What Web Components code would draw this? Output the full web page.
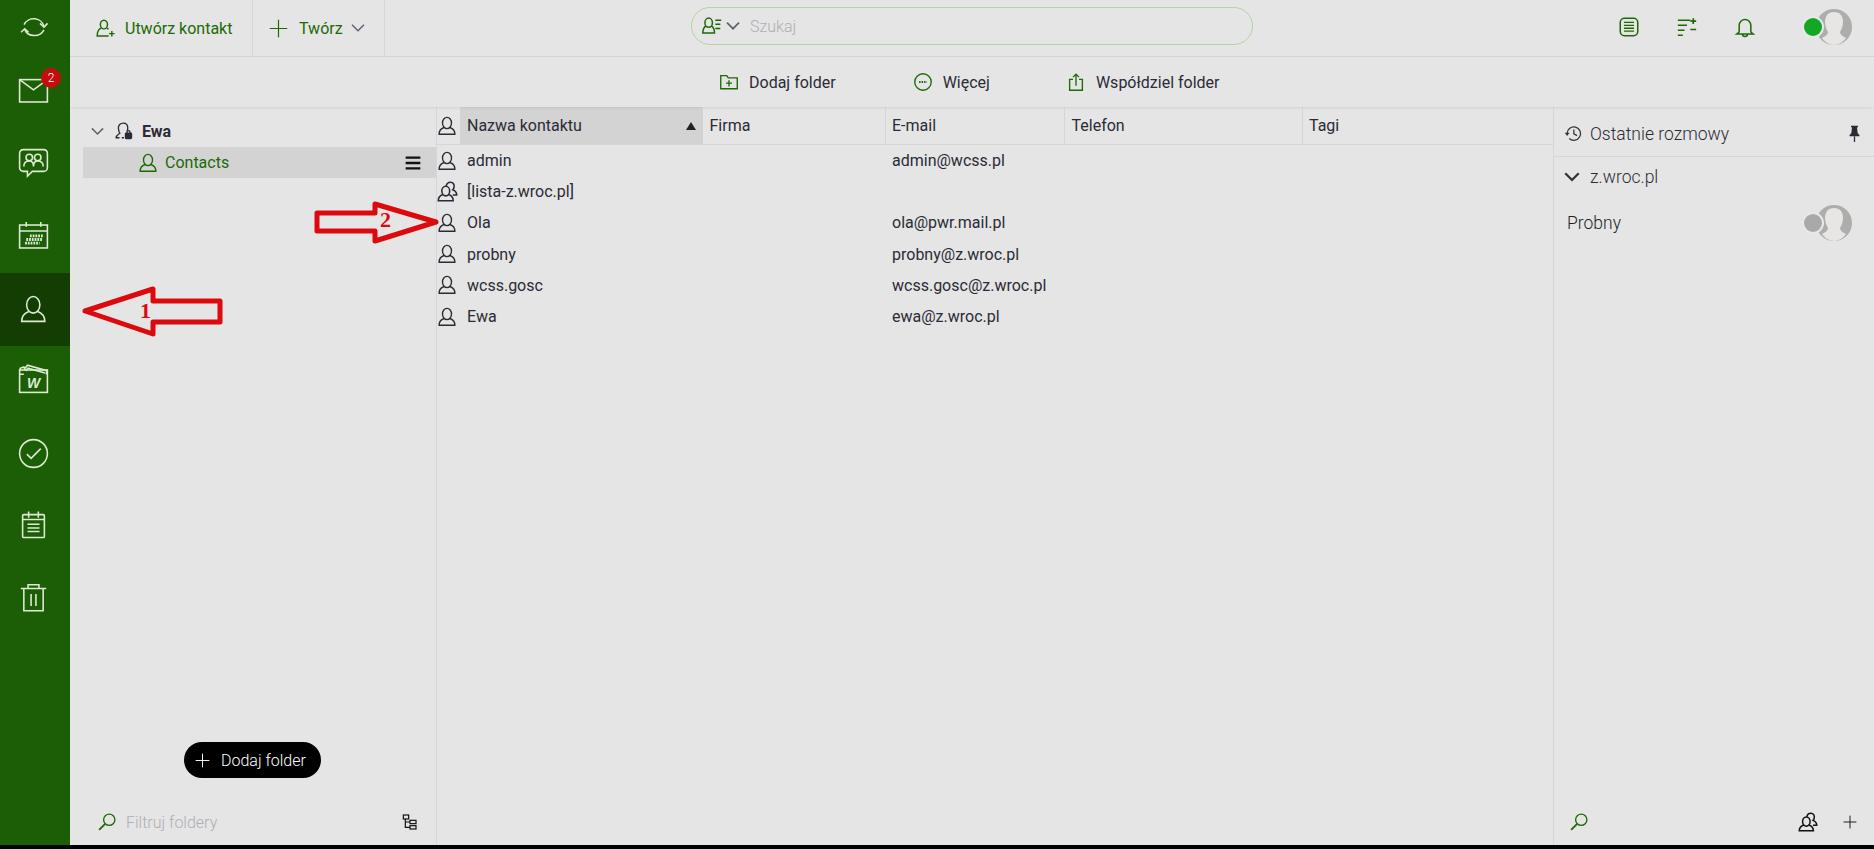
<!DOCTYPE html>
<html lang="pl">
<head>
<meta charset="utf-8">
<title>Kontakty</title>
<style>
    html, body { margin: 0; height: 100%; overflow: hidden; background: #000; }
    body { font-family: Roboto, "Liberation Sans", sans-serif; }
</style>
</head>
<body>
<app-shell>
    <app-rail slot="rail"></app-rail>
    <top-bar slot="top"></top-bar>
    <action-bar slot="actions"></action-bar>
    <folder-panel slot="folders"></folder-panel>
    <contact-table slot="table">
        <contact-row name="admin" email="admin@wcss.pl"></contact-row>
        <contact-row name="[lista-z.wroc.pl]" icon="group"></contact-row>
        <contact-row name="Ola" email="ola@pwr.mail.pl"></contact-row>
        <contact-row name="probny" email="probny@z.wroc.pl"></contact-row>
        <contact-row name="wcss.gosc" email="wcss.gosc@z.wroc.pl"></contact-row>
        <contact-row name="Ewa" email="ewa@z.wroc.pl"></contact-row>
    </contact-table>
    <recent-panel slot="recent"></recent-panel>
</app-shell>
<note-arrow dir="left" label="1" style="left:80px;top:285px"></note-arrow>
<note-arrow dir="right" label="2" style="left:312px;top:200px"></note-arrow>

<script>
    /* ikony - wszystko na currentColor, viewBox 24 */
    const ICONS = {
        sync: '<path d="M3.500 10A9 8.500 0 0 1 20.600 12"/><path d="M17.100 8.900l3.500 3.200 3-3.200"/><path d="M20.500 14.500A9 8.500 0 0 1 4 14"/><path d="M.9 16.500l3.100-3 3.300 3"/>',
        mail: '<rect x=".5" y="3" width="23" height="18.500"/><path d="M.5 3L12 11.500 23.500 3"/>',
        chat: '<path d="M3.500 .5h17a3 3 0 0 1 3 3v12a3 3 0 0 1-3 3H11l-4 4v-4H3.500a3 3 0 0 1-3-3v-12a3 3 0 0 1 3-3z"/><circle cx="8.500" cy="7" r="2.700"/><circle cx="15.500" cy="7" r="2.700"/><path d="M4 14.500c0-3 2-4.500 4.500-4.500S12 11.500 12 14.500M12 14.500c0-3 1-4.500 3.500-4.500S20 11.500 20 14.500"/>',
        calendar: '<rect x=".5" y="2.500" width="23" height="19"/><path d="M.5 7.500h23M6 0v4M18 0v4"/><path stroke-width="2.400" stroke-dasharray="1.500 .8" d="M9 11.500h11M6 14.500h13M5 17.500h12"/>',
        person: '<ellipse cx="12" cy="8" rx="6" ry="7.500"/><path d="M8 14C4 15.500 1.500 18 1.500 23h21c0-5-2.500-7.500-6.500-9"/>',
        group: '<ellipse cx="10" cy="11.500" rx="4.500" ry="5.500"/><path d="M7 15.500c-3 1-5.500 3-5.500 7h17c0-4-2.500-6-5.500-7"/><path d="M10.500 6c.5-3 3-4.500 5-4.500 3 0 4.500 2.500 4 5.500-.2 1.200-.7 2.300-1.500 3 2.500 1 4.500 3 4.500 6H18"/>',
        docs: '<rect x=".5" y="5" width="23" height="18.500"/><path d="M.5 8.500h3.500M1 5V3.500l3-1 1 2.500M5 3.500L7 1l16 4.500-.5 3M5.500 5.500l2-2 14 4"/>',
        check: '<circle cx="12" cy="12" r="11.500"/><path d="M6.500 12.500l3.500 3.500L18 8"/>',
        note: '<rect x="3" y="3" width="18" height="19" rx="1"/><path d="M8 .5v5M16 .5v5M3 7h18M7 11h10M7 14h10M7 17h10"/>',
        trash: '<path d="M1.500 4.500h21M4 4.500V23h16V4.500M7.500 4.500V1.500h9v3M10 9v10M14 9v10"/>',
        personAdd: '<ellipse cx="10" cy="7" rx="4.500" ry="5.500"/><path d="M6.500 11.500C3.500 12.500 1.500 15 1.500 21.500H16"/><path d="M13.500 11.500c1 .4 1.700.9 2.300 1.500M20 15v7M16.500 18.500h7"/>',
        plus: '<path d="M12 1v22M1 12h22"/>',
        chevron: '<path d="M3 7l9 9 9-9"/>',
        personList: '<ellipse cx="8" cy="8" rx="4.500" ry="5.500"/><path d="M5 12c-2.500 1-4 3.500-4 8.500h14c0-5-1.500-7.500-4-8.500M16 5h7M16 10h6M16 15h6"/>',
        folderAdd: '<path d="M1 21V3.500h8l2 3h12V21z"/><path d="M12 9.500v8.500M8 13.500h8"/>',
        more: '<circle cx="12" cy="12" r="11"/><path stroke-width="2.400" stroke-dasharray="2 1.300" d="M6.800 12h10.400"/>',
        share: '<path d="M8 8.500H3.500V23h17V8.500H16M12 17V1.500M8 5.500l4-4 4 4"/>',
        list: '<rect x="1.500" y="1.500" width="21" height="21" rx="5"/><path stroke-width="1.600" d="M6 6.500h12M6 10h12M6 13.500h12M6 17h12"/>',
        tasks: '<path d="M1 4h15M1 10h11M1 16h8M1 22h6"/><path stroke-width="2" d="M19.500 1.500v7M16 5h7M16 15h7"/>',
        bell: '<path d="M5 18V10a7 7 0 0 1 14 0v8l3 2.500H2z"/><path d="M9 20.500a3 3 0 0 0 6 0"/>',
        personLock: '<path d="M6 21c-1.500 0-3.500 0-4.500 0 0-3 3-4.500 5-6-1.500-2.500-2-5-2-7 0-4 2.500-6.500 6.500-6.500S17 4 17 8c0 1.500-.3 2.800-.8 4M12 21H9"/><rect x="14" y="15" width="8" height="7" rx="1" fill="currentColor"/><path d="M16 15v-1.500a2 2 0 0 1 4 0V15"/>',
        burger: '<path stroke-width="3.500" d="M1 4h22M1 12h22M1 20h22"/>',
        search: '<circle cx="15" cy="9" r="7.500"/><path stroke-width="2.400" d="M9.500 14.500L1.500 22.500"/>',
        tree: '<rect x="2" y="1.500" width="8" height="6"/><rect x="12" y="9.500" width="9" height="5"/><rect x="12" y="17.500" width="9" height="5"/><path d="M5 7.500V20h7M5 12h7"/>',
        history: '<path d="M3 12a9.500 9.500 0 1 1 3 7"/><path fill="currentColor" stroke="none" d="M-.5 11h7l-3.500 4.500z"/><path d="M12.500 6.500v6l4.500 2.500"/>',
        pin: '<path fill="currentColor" stroke="none" d="M7 1h10v2h-1.500l1 8.500 2.500 2.500v2H5v-2l2.500-2.500 1-8.500H7z"/><path d="M12 16v8"/>'
    };

    class XIcon extends HTMLElement {
        connectedCallback() {
            const size = this.getAttribute('size') || 16;
            const sw = this.getAttribute('sw') || 1.800;
            this.attachShadow({mode: 'open'}).innerHTML = `
                <style>:host { display: inline-flex; flex: none; width: ${size}px; height: ${size}px; } svg { display: block; width: 100%; height: 100%; overflow: visible; }</style>
                <svg viewBox="0 0 24 24" fill="none" stroke="currentColor" stroke-width="${sw}">${ICONS[this.getAttribute('name')]}</svg>`;
        }
    }
    customElements.define('x-icon', XIcon);

    class AppShell extends HTMLElement {
        constructor() {
            super();
            this.attachShadow({mode: 'open'}).innerHTML = `
                <style>
                    :host { display: grid; grid-template-columns: 70px 367px 1116px 1fr; grid-template-rows: 57px 50px 738px; height: 845px; background: #e5e5e5; color: #2b2b36; font: 400 16px Roboto, "Liberation Sans", sans-serif; }
                    ::slotted([slot=rail]) { grid-row: 1 / 4; }
                    ::slotted([slot=top]), ::slotted([slot=actions]) { grid-column: 2 / 5; }
                </style>
                <slot name="rail"></slot><slot name="top"></slot><slot name="actions"></slot>
                <slot name="folders"></slot><slot name="table"></slot><slot name="recent"></slot>`;
        }
    }
    customElements.define('app-shell', AppShell);

    class RailItem extends HTMLElement {
        constructor() {
            super();
            this.attachShadow({mode: 'open'}).innerHTML = `
                <style>
                    :host { position: relative; display: flex; align-items: center; justify-content: center; height: 73px; padding-right: 3px; color: #dcebd2; }
                    :host([active]) { background: #143d04; }
                    :host([short]) { height: 54px; }
                    .badge { position: absolute; left: 41px; top: 14px; width: 20px; height: 20px; border-radius: 50%; background: #c50d0d; color: #fff; font: 300 12px/20px Roboto, sans-serif; text-align: center; }
                    .badge:empty { display: none; }
                </style>
                <slot></slot><span class="badge"></span>`;
        }
        connectedCallback() {
            this.shadowRoot.querySelector('.badge').textContent = this.getAttribute('badge') || '';
        }
    }
    customElements.define('rail-item', RailItem);

    class AppRail extends HTMLElement {
        constructor() {
            super();
            this.attachShadow({mode: 'open'}).innerHTML = `
                <style>
                    :host { display: flex; flex-direction: column; background: #1c5e06; }
                    .low { height: 71.800px; }
                    .w { position: relative; width: 29px; height: 29px; margin-top: -6px; }
                    .w b { position: absolute; left: 0; right: 0; top: 12px; text-align: center; font: italic 700 14px/14px "Liberation Sans", sans-serif; color: #dcebd2; }
                </style>
                <rail-item short><x-icon name="sync" size="28" sw="1.300"></x-icon></rail-item>
                <rail-item badge="2"><x-icon name="mail" size="29" sw="1.300"></x-icon></rail-item>
                <rail-item><x-icon name="chat" size="29" sw="1.300"></x-icon></rail-item>
                <rail-item><x-icon name="calendar" size="29" sw="1.300"></x-icon></rail-item>
                <rail-item active><x-icon name="person" size="26.500" sw="1.400"></x-icon></rail-item>
                <rail-item class="low"><span class="w"><x-icon name="docs" size="29" sw="1.300"></x-icon><b>W</b></span></rail-item>
                <rail-item class="low"><x-icon name="check" size="29" sw="1.300"></x-icon></rail-item>
                <rail-item class="low"><x-icon name="note" size="29" sw="1.300"></x-icon></rail-item>
                <rail-item class="low"><x-icon name="trash" size="29" sw="1.300"></x-icon></rail-item>`;
        }
    }
    customElements.define('app-rail', AppRail);

    class TopBar extends HTMLElement {
        constructor() {
            super();
            this.attachShadow({mode: 'open'}).innerHTML = `
                <style>
                    :host { display: flex; align-items: stretch; border-bottom: 1px solid #d6d6d6; box-sizing: border-box; color: #1c6a04; }
                    .btn { display: flex; align-items: center; border-right: 1px solid #d6d6d6; height: 56px; box-sizing: border-box; }
                    .create { width: 183px; padding-left: 26px; gap: 10px; }
                    .new { width: 132px; padding-left: 16px; }
                    .new span { margin: 0 7px 0 11px; }
                    .new x-icon:last-child { color: #5d6470; }
                    .search { display: flex; flex: none; align-items: center; width: 562px; height: 38px; box-sizing: border-box; margin: 7px 0 0 306px; border: 1px solid #b6d3a2; border-radius: 19px; padding-left: 10px; }
                    .search .chev { color: #5d6470; margin: 0 9px 0 3px; }
                    .search span { color: #aeaeb4; font-weight: 300; }
                    .tools { display: flex; align-items: center; margin-left: auto; padding-right: 22px; gap: 38px; height: 54px; }
                    user-avatar { margin-left: 11px; }
                </style>
                <div class="btn create"><x-icon name="personAdd" size="19"></x-icon><span>Utwórz kontakt</span></div>
                <div class="btn new"><x-icon name="plus" size="19" sw="1.500"></x-icon><span>Twórz</span><x-icon name="chevron" size="16" sw="2.200"></x-icon></div>
                <div class="search"><x-icon name="personList" size="20"></x-icon><x-icon class="chev" name="chevron" size="16" sw="2.600"></x-icon><span>Szukaj</span></div>
                <div class="tools">
                    <x-icon name="list" size="20"></x-icon>
                    <x-icon name="tasks" size="20"></x-icon>
                    <x-icon name="bell" size="20"></x-icon>
                    <user-avatar status="on"></user-avatar>
                </div>`;
        }
    }
    customElements.define('top-bar', TopBar);

    /* awatar ze statusem - dot lezy na obrazku */
    class UserAvatar extends HTMLElement {
        connectedCallback() {
            const on = this.getAttribute('status') === 'on';
            this.attachShadow({mode: 'open'}).innerHTML = `
                <style>
                    :host { position: relative; display: block; width: 48px; height: 36px; }
                    svg { position: absolute; right: 0; top: 0; width: 36px; height: 36px; }
                    .dot { position: absolute; left: 0; top: 9px; width: 18px; height: 18px; border-radius: 50%; background: ${on ? '#12a824' : '#a9a9a9'}; box-shadow: 0 0 0 2px #e8e8e8; }
                </style>
                <svg viewBox="0 0 36 36">
                    <circle cx="18" cy="18" r="18" fill="#adadab"/>
                    <path fill="#e8e6e4" d="M18 3c6 0 9 4 9 10 0 5-2 8-3 10 0 3 4 5 6 6-3 4-7 7-12 7S9 33 6 29c2-1 6-3 6-6-1-2-3-5-3-10 0-6 3-10 9-10z"/>
                </svg>
                <span class="dot"></span>`;
        }
    }
    customElements.define('user-avatar', UserAvatar);

    class ActionBar extends HTMLElement {
        constructor() {
            super();
            this.attachShadow({mode: 'open'}).innerHTML = `
                <style>
                    :host { display: flex; align-items: center; position: relative; z-index: 1; padding-left: 650px; box-shadow: 0 1px 3px rgba(0,0,0,.08); }
                    .act { display: flex; align-items: center; gap: 11px; }
                    x-icon { color: #1c6a04; }
                    .more { margin-left: 78px; }
                    .share { margin-left: 77px; }
                </style>
                <div class="act"><x-icon name="folderAdd" size="18"></x-icon><span>Dodaj folder</span></div>
                <div class="act more"><x-icon name="more" size="18"></x-icon><span>Więcej</span></div>
                <div class="act share"><x-icon name="share" size="18"></x-icon><span>Współdziel folder</span></div>`;
        }
    }
    customElements.define('action-bar', ActionBar);

    class FolderPanel extends HTMLElement {
        constructor() {
            super();
            this.attachShadow({mode: 'open'}).innerHTML = `
                <style>
                    :host { display: flex; flex-direction: column; border-right: 1px solid #d6d6d6; }
                    .owner { display: flex; align-items: center; height: 40px; padding: 8px 0 0 20px; box-sizing: border-box; }
                    .owner .chev { color: #5d6470; margin-right: 10px; }
                    .owner b { font-weight: 700; margin-left: 9px; }
                    .folder { display: flex; align-items: center; height: 31px; margin-left: 13px; padding-left: 56px; background: #d3d3d3; color: #1c6a04; }
                    .folder span { margin-left: 8px; flex: 1; }
                    .folder .burger { color: #111; margin-right: 15px; }
                    .add { align-self: flex-start; display: flex; align-items: center; gap: 11px; height: 36px; margin: auto 0 21px 114px; padding: 0 15px 0 11px; border-radius: 18px; background: #000; color: #fff; font-weight: 300; }
                    .filter { display: flex; align-items: center; height: 46px; padding: 0 18px 0 28px; box-sizing: border-box; color: #aeaeb4; font-weight: 300; }
                    .filter .find { color: #1c6a04; margin-right: 10px; }
                    .filter span { flex: 1; }
                    .filter .tree { color: #111; }
                </style>
                <div class="owner"><x-icon class="chev" name="chevron" size="15" sw="2.400"></x-icon><x-icon name="personLock" size="18"></x-icon><b>Ewa</b></div>
                <div class="folder"><x-icon name="person" size="18"></x-icon><span>Contacts</span><x-icon class="burger" name="burger" size="16"></x-icon></div>
                <div class="add"><x-icon name="plus" size="15" sw="1.500"></x-icon><span>Dodaj folder</span></div>
                <div class="filter"><x-icon class="find" name="search" size="18"></x-icon><span>Filtruj foldery</span><x-icon class="tree" name="tree" size="16"></x-icon></div>`;
        }
    }
    customElements.define('folder-panel', FolderPanel);

    class ContactTable extends HTMLElement {
        constructor() {
            super();
            this.attachShadow({mode: 'open'}).innerHTML = `
                <style>
                    :host { display: block; --cols: 23px 243px 182.500px 179.500px 237.500px 1fr; }
                    .head { display: grid; grid-template-columns: var(--cols); height: 37px; border-bottom: 1px solid #d6d6d6; }
                    .head > div { display: flex; align-items: center; padding-left: 6.500px; border-right: 1px solid #d6d6d6; }
                    .head .ico { padding-left: 1px; border: 0; }
                    .head .sort { background: #d3d3d3; border: 0; justify-content: space-between; padding: 0 7px; }
                    .tri { width: 0; height: 0; border: 5px solid transparent; border-top: 0; border-bottom: 8px solid #222; }
                    .head > div:last-child { border: 0; }
                </style>
                <div class="head">
                    <div class="ico"><x-icon name="person" size="18"></x-icon></div>
                    <div class="sort"><span>Nazwa kontaktu</span><i class="tri"></i></div>
                    <div>Firma</div><div>E-mail</div><div>Telefon</div><div>Tagi</div>
                </div>
                <slot></slot>`;
        }
    }
    customElements.define('contact-table', ContactTable);

    class ContactRow extends HTMLElement {
        connectedCallback() {
            const group = this.getAttribute('icon') === 'group';
            this.attachShadow({mode: 'open'}).innerHTML = `
                <style>
                    :host { display: grid; grid-template-columns: var(--cols); height: 31.200px; align-items: center; }
                    div { padding-left: 6.500px; }
                    .name { padding-left: 7px; }
                    .ico { display: flex; padding-left: ${group ? 0 : 1}px; }
                </style>
                <div class="ico"><x-icon name="${group ? 'group' : 'person'}" size="${group ? 21 : 18}"></x-icon></div>
                <div class="name">${this.getAttribute('name')}</div><div></div>
                <div>${this.getAttribute('email') || ''}</div>`;
        }
    }
    customElements.define('contact-row', ContactRow);

    class RecentPanel extends HTMLElement {
        constructor() {
            super();
            this.attachShadow({mode: 'open'}).innerHTML = `
                <style>
                    :host { display: flex; flex-direction: column; border-left: 1px solid #d6d6d6; font-size: 17.500px; font-weight: 300; }
                    .title { display: flex; align-items: center; height: 50px; padding: 4px 11px 0; box-sizing: border-box; border-bottom: 1px solid #d6d6d6; }
                    .title x-icon:first-child { margin-right: 8px; color: #333; }
                    .title span { flex: 1; }
                    .domain { display: flex; align-items: center; height: 38px; padding: 1px 0 0 9px; }
                    .domain x-icon { margin-right: 9px; color: #333; }
                    .person { display: flex; align-items: center; justify-content: space-between; height: 36px; margin-top: 9px; padding: 0 22px 0 13px; color: #1e1e24; }
                    .foot { display: flex; align-items: center; margin-top: auto; height: 46px; padding: 0 17px 0 16px; }
                    .foot x-icon { color: #111; }
                    .foot .find { color: #1c6a04; margin-right: auto; }
                    .foot .plus { margin-left: 25px; }
                </style>
                <div class="title"><x-icon name="history" size="17"></x-icon><span>Ostatnie rozmowy</span><x-icon name="pin" size="17"></x-icon></div>
                <div class="domain"><x-icon name="chevron" size="18" sw="3"></x-icon><span>z.wroc.pl</span></div>
                <div class="person"><span>Probny</span><user-avatar></user-avatar></div>
                <div class="foot"><x-icon class="find" name="search" size="18"></x-icon><x-icon name="group" size="20"></x-icon><x-icon class="plus" name="plus" size="14" sw="1.600"></x-icon></div>`;
        }
    }
    customElements.define('recent-panel', RecentPanel);

    /* strzalki z adnotacji lezace nad zrzutem */
    class NoteArrow extends HTMLElement {
        connectedCallback() {
            const left = this.getAttribute('dir') === 'left';
            const shape = left
                ? '<polygon points="5,26 73,4 73,16 140,16 140,37 73,37 73,49"/>'
                : '<polygon points="124,22 63,4 63,13 5,13 5,31 63,31 63,41"/>';
            this.attachShadow({mode: 'open'}).innerHTML = `
                <style>
                    :host { position: absolute; display: block; width: 146px; height: 54px; }
                    svg { display: block; width: 146px; height: 54px; }
                    polygon { fill: none; stroke: #dd0a0d; stroke-width: 5; stroke-linejoin: round; }
                    span { position: absolute; top: ${left ? 14 : 8}px; left: ${left ? 60 : 68}px; color: #dd0a0d; font: 700 22px/24px "Liberation Serif", serif; }
                </style>
                <svg viewBox="0 0 146 54">${shape}</svg>
                <span>${this.getAttribute('label')}</span>`;
        }
    }
    customElements.define('note-arrow', NoteArrow);
</script>
</body>
</html>
